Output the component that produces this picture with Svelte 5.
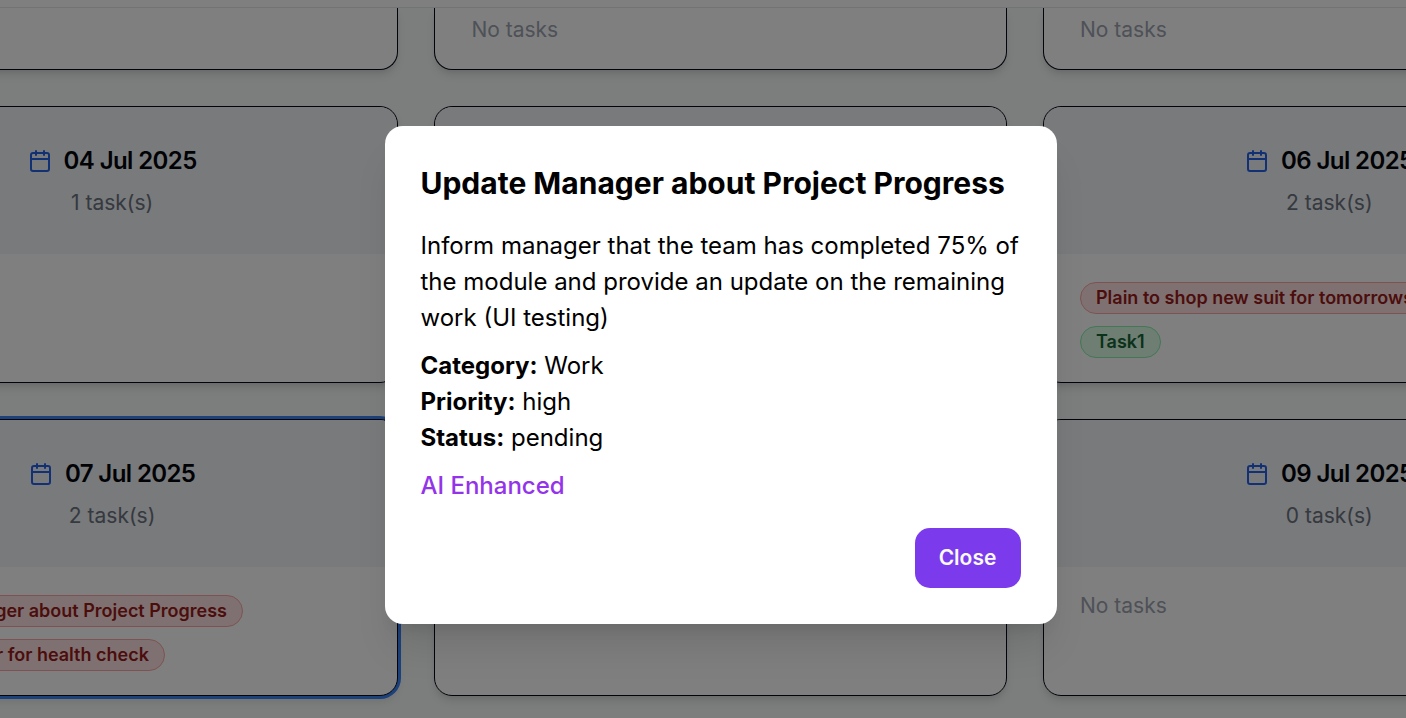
<script>
  const rows = [
    {
      size: 'tail',
      days: [{ empty: false }, { empty: true }, { empty: true }]
    },
    {
      days: [
        { date: '04 Jul 2025', count: 1 },
        {},
        {
          date: '06 Jul 2025',
          count: 2,
          tasks: [
            { name: 'Plain to shop new suit for tomorrows', tone: 'high' },
            { name: 'Task1', tone: 'low' }
          ]
        }
      ]
    },
    {
      days: [
        {
          date: '07 Jul 2025',
          count: 2,
          today: true,
          tasks: [
            { name: 'Update Manager about Project Progress', tone: 'high' },
            { name: 'Visit to Doctor for health check', tone: 'high' }
          ]
        },
        {},
        { date: '09 Jul 2025', count: 0, empty: true }
      ]
    }
  ];
  const details = [
    ['Category:', 'Work'],
    ['Priority:', 'high'],
    ['Status:', 'pending']
  ];
</script>

<div class="page">
  <div class="topbar"></div>
  <main class="board">
    {#each rows as row}
      {#each row.days as day}
        <section class="card" class:tail={row.size === 'tail'} class:today={day.today}>
          {#if row.size !== 'tail'}
            <header>
              {#if day.date}
                <h3>
                  <svg viewBox="0 0 24 24" width="24" height="24" fill="none" stroke="currentColor" stroke-width="2" stroke-linecap="round" stroke-linejoin="round">
                    <path d="M8 2v4M16 2v4" />
                    <rect x="3" y="4" width="18" height="18" rx="2" />
                    <path d="M3 10h18" />
                  </svg>
                  <span>{day.date}</span>
                </h3>
                <p>{day.count} task(s)</p>
              {/if}
            </header>
          {/if}
          {#if day.tasks}
            <div class="tasks">
              {#each day.tasks as task}
                <span class="badge {task.tone}">{task.name}</span>
              {/each}
            </div>
          {:else if day.empty}
            <div class="none">No tasks</div>
          {/if}
        </section>
      {/each}
    {/each}
  </main>

  <div class="overlay">
    <div class="modal" role="dialog" aria-modal="true">
      <h2>Update Manager about Project Progress</h2>
      <p class="about">Inform manager that the team has completed 75% of the module and provide an update on the remaining work (UI testing)</p>
      <div class="details">
        {#each details as [label, value]}
          <div><strong>{label}</strong> {value}</div>
        {/each}
      </div>
      <div class="ai">AI Enhanced</div>
      <div class="actions"><button>Close</button></div>
    </div>
  </div>
</div>

<style>
  :global(body) { margin: 0; overflow: hidden; }
  .page {
    position: relative;
    width: 1406px;
    height: 718px;
    overflow: hidden;
    background: #f7fcf9;
    font-family: Inter, sans-serif;
    font-size: 24px;
    line-height: 36px;
    color: #020817;
  }
  h2, h3, p { margin: 0; }
  .topbar { position: relative; z-index: 1; box-sizing: border-box; height: 8px; background: #fff; border-bottom: 1px solid #e5e7eb; }
  .board {
    display: grid;
    grid-template-columns: repeat(3, 572.6px);
    grid-template-rows: 62px 277px 277px;
    gap: 36px;
    margin-left: -174.2px;
  }
  .card {
    box-sizing: border-box;
    overflow: hidden;
    border: 1px solid #020817;
    border-radius: 18px;
    background: #fff;
    box-shadow: 0 6px 9px -1.5px rgba(0, 0, 0, .1), 0 3px 6px -3px rgba(0, 0, 0, .1);
  }
  .card.tail { border-top: 0; border-radius: 0 0 18px 18px; }
  .card.today { box-shadow: 0 0 0 3px #3b82f6, 0 6px 9px -1.5px rgba(0, 0, 0, .1); }
  header {
    box-sizing: border-box;
    height: 147px;
    padding: 36px;
    border-radius: 18px 18px 0 0;
    text-align: center;
    background: #f2f4f6;
  }
  h3 { display: flex; align-items: center; justify-content: center; gap: 12px; font-size: 24px; font-weight: 600; letter-spacing: -.6px; color: #02040a; }
  h3 svg { color: #2563eb; }
  header p { margin-top: 9px; font-size: 21px; line-height: 30px; color: #6b7280; }
  .tasks { display: flex; flex-direction: column; align-items: flex-start; gap: 12px; padding: 28px 36px; }
  .badge { padding: 3px 15px; border: 1px solid; border-radius: 99px; font-size: 18px; line-height: 24px; font-weight: 600; white-space: nowrap; }
  .today .badge { margin-left: .7px; }
  .high { color: #991b1b; background: #fee2e2; border-color: #fca5a5; }
  .low { color: #166534; background: #dcfce7; border-color: #86efac; }
  .none { padding: 24px 36px; font-size: 21px; line-height: 30px; color: #9ca3af; }
  .tail .none { padding-top: 7px; }
  .overlay { position: absolute; inset: 0; z-index: 2; display: flex; align-items: center; justify-content: center; padding-left: 35px; background: rgba(0, 0, 0, .5); }
  .modal {
    box-sizing: border-box;
    width: 672px;
    height: 498px;
    margin-top: 32px;
    padding: 36px;
    border-radius: 18px;
    background: #fff;
    color: #000;
    box-shadow: 0 30px 37px -7px rgba(0, 0, 0, .1), 0 12px 15px -9px rgba(0, 0, 0, .1);
  }
  h2 { font-size: 30px; line-height: 42px; font-weight: 700; margin-bottom: 24px; white-space: nowrap; }
  .about, .details { margin-bottom: 12px; }
  strong { font-weight: 700; }
  .ai { color: #9333ea; font-weight: 500; }
  .actions { display: flex; justify-content: flex-end; margin-top: 24px; }
  button { width: 106px; height: 60px; padding: 0; border: 0; border-radius: 15px; background: #7c3aed; color: #f8fafc; font: 600 21px/30px Inter, sans-serif; }
</style>
